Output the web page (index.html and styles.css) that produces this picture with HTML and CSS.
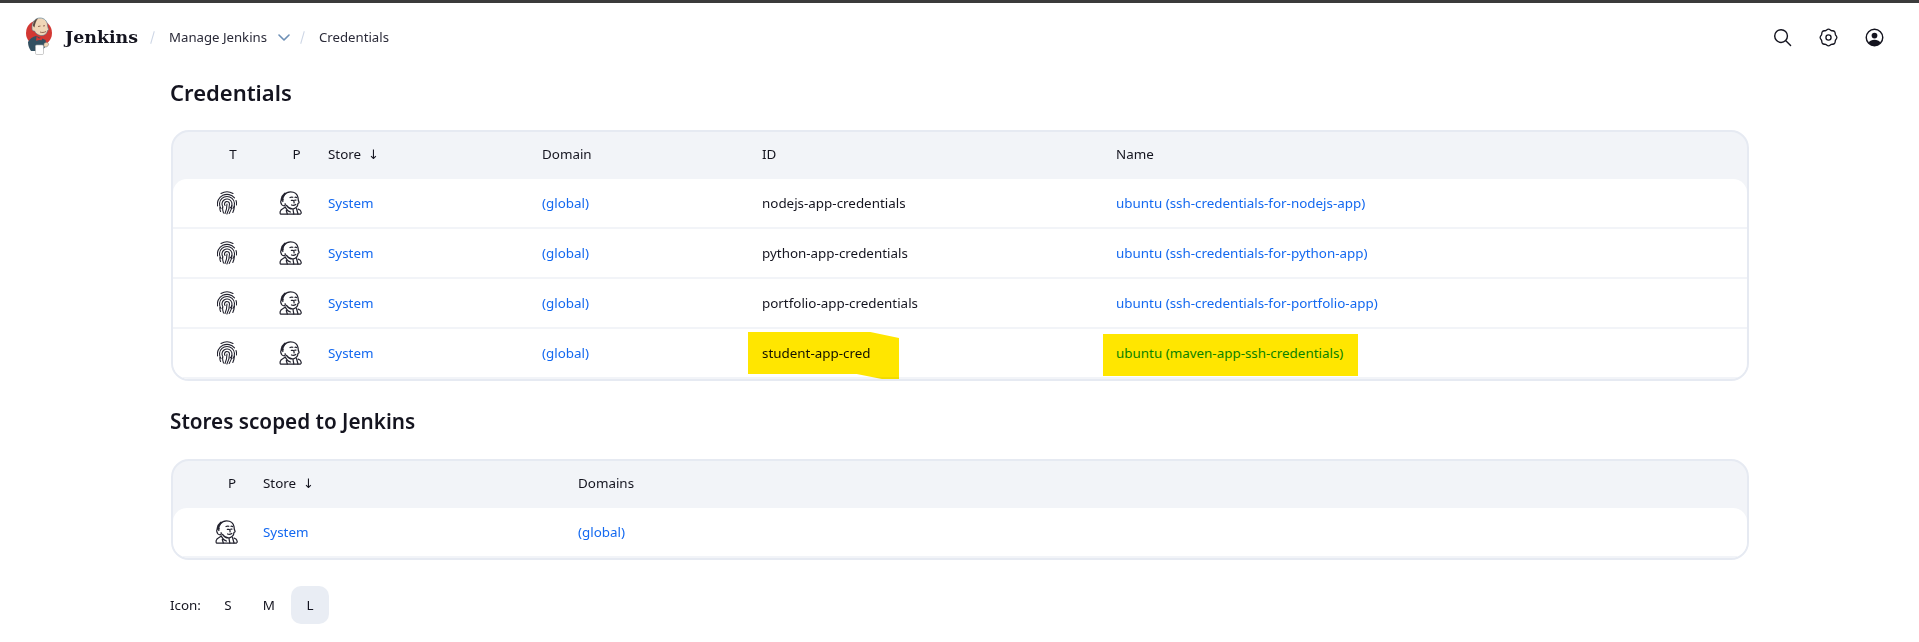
FILE: index.html
```html
<!DOCTYPE html>
<html lang="en">
<head>
<meta charset="UTF-8">
<meta name="viewport" content="width=device-width, initial-scale=1.0">
<title>Credentials - Jenkins</title>
<link rel="stylesheet" href="styles.css">
</head>
<body>

<svg class="sprites" width="0" height="0">
    <symbol id="fingerprint" viewBox="0 0 20 24">
        <g fill="none" stroke="#23232f" stroke-width="1.1" stroke-linecap="round">
            <path d="M4 2.500A12 12 0 0 1 16 2.500"/>
            <path d="M.6 15A9.700 9.700 0 0 1 17.500 6.800"/>
            <path d="M19 9.500A9.700 9.700 0 0 1 19.500 14"/>
            <path d="M4 17.500A7.500 7.500 0 1 1 16 17.500"/>
            <path d="M6 16A5 5 0 1 1 13 17"/>
            <path d="M8 14.500A2.500 2.500 0 1 1 12.500 13"/>
            <path d="M10 13c0 3-.5 6-2 9.500"/>
            <path d="M12.500 13c0 3.500-1 7-2.600 10"/>
            <path d="M15 14.500c0 3-1.200 5.500-2.800 8"/>
            <path d="M17.500 15c-.2 2.300-.6 4.300-1.700 6.500"/>
            <path d="M5.500 16c0 2.200.3 4 1 6"/>
            <path d="M2.800 16.500c0 1.400.2 2.700.8 4"/>
        </g>
    </symbol>
    <symbol id="butler" viewBox="0 0 23 24">
        <g fill="none" stroke="#23232f" stroke-width="1.250" stroke-linecap="round" stroke-linejoin="round">
            <path d="M3.800 10.500C3.200 5 6.500.8 11.500.8c4.300 0 7 2.700 7.500 5.700.3 1.700 0 3 .8 4 .8 1.200-.2 1.800-.8 1.800-.2 2.500-2 5-4.500 5.500-3 .5-5.500-1.300-7-3.500"/>
            <path d="M4 8.500C2.200 8.300 1.500 10 1.800 11.500c.3 1.800 1.700 3.200 3.500 3.300 1-.1 1.200-1.200.8-2.100"/>
            <path d="M11 6.500c1-.6 2-.6 2.800-.2M16 6.300c.6-.2 1.200-.1 1.600.2M12.300 9.300h1.500M15.900 9.100h1.100M12.500 14c1.500.6 3 .4 4.300-.5M14.800 9.500l.3 2.300"/>
            <path d="M6.500 16C4.500 17.500 1.500 18 1.200 20.500c-.2 1.500-.2 2.200.3 2.500h20c.700-.3.800-1.300.500-2.300-.3-1.300-1.300-2-2.800-2.500"/>
            <path d="M6.500 16.500c1 2 3 4 5 4.500M8.300 23l-1-3.500M14 18.500l.8 4.500M17.500 17.500l1.500 5.500"/>
            <path d="M2.600 8.500C3 6 4 4 6 2.500" stroke-width="2"/>
        </g>
    </symbol>
</svg>

<header class="topbar">
    <a class="brand">
        <svg class="logo" viewBox="0 0 28 38" width="28" height="38">
            <circle cx="14" cy="16" r="13" fill="#d33833"/>
            <path d="M7 12C6.500 5 10 1 15 1c4.500 0 7 3 7.500 7 .3 2 .5 3 1 4 .3 1-.5 1.500-1 1.500-.3 3.500-3.500 5.500-7 5-3-.5-5-2.500-6-4.500C8 14 7.200 13.500 7 12z" fill="#f0d6b7" stroke="#49728b" stroke-width=".6"/>
            <path d="M8 9C8 4.500 10.500 2 13 1.500 10.800 4 10 7 9.500 10.500z" fill="#5a4a42"/>
            <path d="M13 9.500l2.500-.5M18 9l2-.3M15 15c2 .8 4 .6 6-.5" fill="none" stroke="#7a4a3a" stroke-width=".8"/>
            <path d="M3 25c1.500-3.500 5-5.500 8-6l6 2.500 3.500 1.500 1 5.500-5 5.500H6C4.500 32 3 29 3 25z" fill="#335061"/>
            <path d="M11.500 19.500l2.500 2 3.500-1.300-.8 3-2.600-.2-3 .8z" fill="#d33833"/>
            <rect x="10.500" y="28" width="8" height="9.500" rx="1.200" fill="#fff" stroke="#aaa" stroke-width=".6"/>
            <path d="M19 26.500c1.500-1.500 4-1.200 4.500.2.500 1.500-1 3-2.500 3.300-1 .2-1.800-.2-2.200-.8z" fill="#f0d6b7" stroke="#777" stroke-width=".5"/>
        </svg>
        <span class="brand-name">Jenkins</span>
    </a>
    <nav class="crumbs">
        <span class="crumb-sep"></span>
        <a class="crumb">Manage Jenkins</a>
        <svg class="chevron" viewBox="0 0 12 7" width="12" height="7"><path d="M1 1l5 5 5-5" fill="none" stroke="#6d8fb5" stroke-width="1.600" stroke-linecap="round" stroke-linejoin="round"/></svg>
        <span class="crumb-sep"></span>
        <a class="crumb">Credentials</a>
    </nav>
    <div class="actions">
        <svg viewBox="0 0 20 20" width="19" height="19"><g fill="none" stroke="#14141f" stroke-width="1.500" stroke-linecap="round"><circle cx="8.500" cy="8.500" r="6.700"/><path d="M13.500 13.500L18.500 18.500"/></g></svg>
        <svg viewBox="0 0 20 20" width="19" height="19"><g fill="none" stroke="#14141f" stroke-width="1.400" stroke-linejoin="round"><path d="M10 1.200c1.400 0 2 1.100 3 1.500 1.100.4 2.400 0 3.300 1 1 .9.600 2.200 1 3.300.4 1 1.500 1.600 1.500 3s-1.100 2-1.500 3c-.4 1.100 0 2.400-1 3.300-.9 1-2.200.600-3.300 1-1 .4-1.600 1.500-3 1.500s-2-1.100-3-1.500c-1.100-.4-2.400 0-3.300-1-1-.9-.6-2.200-1-3.300-.4-1-1.500-1.600-1.500-3s1.100-2 1.500-3c.4-1.100 0-2.400 1-3.300.9-1 2.200-.6 3.300-1 1-.4 1.600-1.500 3-1.500z"/><circle cx="10" cy="10" r="2.700"/></g></svg>
        <svg viewBox="0 0 20 20" width="19" height="19"><circle cx="10" cy="10" r="8.700" fill="none" stroke="#14141f" stroke-width="1.500"/><circle cx="10" cy="8" r="3" fill="#14141f"/><path d="M3.800 15.500C5 13 7.500 12.300 10 12.300s5 .7 6.200 3.200C14.800 17.500 12.500 18.700 10 18.700s-4.800-1.200-6.200-3.200z" fill="#14141f"/></svg>
    </div>
</header>

<main class="page">
    <h1 class="title title-main">Credentials</h1>
    <div class="panel">
        <table class="grid">
            <colgroup>
                <col class="col-t"><col class="col-p"><col class="col-store"><col class="col-domain"><col class="col-id"><col>
            </colgroup>
            <thead>
                <tr>
                    <th class="icon-cell t-cell">T</th>
                    <th class="icon-cell">P</th>
                    <th>Store<span class="sort">↓</span></th>
                    <th>Domain</th>
                    <th>ID</th>
                    <th>Name</th>
                </tr>
            </thead>
            <tbody>
                <tr>
                    <td class="icon-cell t-cell"><svg class="ico-t"><use href="#fingerprint"/></svg></td>
                    <td class="icon-cell p-cell"><svg class="ico-p"><use href="#butler"/></svg></td>
                    <td><a class="link">System</a></td>
                    <td><a class="link">(global)</a></td>
                    <td>nodejs-app-credentials</td>
                    <td><a class="link">ubuntu (ssh-credentials-for-nodejs-app)</a></td>
                </tr>
                <tr>
                    <td class="icon-cell t-cell"><svg class="ico-t"><use href="#fingerprint"/></svg></td>
                    <td class="icon-cell p-cell"><svg class="ico-p"><use href="#butler"/></svg></td>
                    <td><a class="link">System</a></td>
                    <td><a class="link">(global)</a></td>
                    <td>python-app-credentials</td>
                    <td><a class="link">ubuntu (ssh-credentials-for-python-app)</a></td>
                </tr>
                <tr>
                    <td class="icon-cell t-cell"><svg class="ico-t"><use href="#fingerprint"/></svg></td>
                    <td class="icon-cell p-cell"><svg class="ico-p"><use href="#butler"/></svg></td>
                    <td><a class="link">System</a></td>
                    <td><a class="link">(global)</a></td>
                    <td>portfolio-app-credentials</td>
                    <td><a class="link">ubuntu (ssh-credentials-for-portfolio-app)</a></td>
                </tr>
                <tr>
                    <td class="icon-cell t-cell"><svg class="ico-t"><use href="#fingerprint"/></svg></td>
                    <td class="icon-cell p-cell"><svg class="ico-p"><use href="#butler"/></svg></td>
                    <td><a class="link">System</a></td>
                    <td><a class="link">(global)</a></td>
                    <td class="marked">student-app-cred<span class="marker marker-id"></span></td>
                    <td class="marked"><a class="link">ubuntu (maven-app-ssh-credentials)</a><span class="marker marker-name"></span></td>
                </tr>
            </tbody>
        </table>
    </div>

    <h2 class="title title-stores">Stores scoped to Jenkins</h2>
    <div class="panel">
        <table class="grid">
            <colgroup>
                <col class="col-p2"><col class="col-store2"><col>
            </colgroup>
            <thead>
                <tr>
                    <th class="icon-cell t-cell">P</th>
                    <th>Store<span class="sort">↓</span></th>
                    <th>Domains</th>
                </tr>
            </thead>
            <tbody>
                <tr>
                    <td class="icon-cell t-cell"><svg class="ico-p"><use href="#butler"/></svg></td>
                    <td><a class="link">System</a></td>
                    <td><a class="link">(global)</a></td>
                </tr>
            </tbody>
        </table>
    </div>

    <div class="icon-size">
        <span class="icon-label">Icon:</span>
        <button class="size-btn">S</button>
        <button class="size-btn">M</button>
        <button class="size-btn size-on">L</button>
    </div>
</main>

</body>
</html>
```

FILE: styles.css
```css
body {
    margin: 0;
    font-family: "Noto Sans", "Open Sans", sans-serif;
    font-size: 13.4px;
    color: #14141f;
    background: #fff;
}
.sprites {
    position: absolute;
}
.topbar {
    display: flex;
    align-items: center;
    height: 68px;
    padding: 0 35px 0 25px;
    border-top: 3px solid #3b3b3b;
}
.brand {
    display: flex;
    align-items: center;
    gap: 12px;
}
.logo {
    display: block;
    margin-bottom: 2px;
}
.brand-name {
    font-family: "DejaVu Serif", serif;
    font-weight: 700;
    font-size: 17.4px;
}
.crumbs {
    display: flex;
    align-items: center;
    margin-left: 14px;
}
.crumb-sep {
    width: 1px;
    height: 13px;
    margin-right: 16px;
    background: #ccd5e5;
    transform: rotate(16deg);
}
.crumb {
    font-size: 13.200px;
    color: #2a2a38;
}
.chevron {
    margin: 0 12px 0 11px;
}
.actions {
    display: flex;
    gap: 27px;
    margin-left: auto;
}
.page {
    padding: 8px 170px 0;
}
.title {
    margin: 0;
    font-size: 20.7px;
    font-weight: 600;
    line-height: 27px;
    color: #14141f;
}
.title-main {
    font-size: 22px;
}
.title-stores {
    margin-top: 27px;
}
.panel {
    margin: 24px 0 0 1px;
    border: 2px solid #e6eaf2;
    border-radius: 18px;
    background: #f2f4f8;
    overflow: hidden;
}
.grid {
    width: 100%;
    border-collapse: separate;
    border-spacing: 0;
    table-layout: fixed;
}
.grid th {
    height: 44px;
    padding: 0 0 3px;
    font-weight: 400;
    text-align: left;
    color: #14141f;
}
.grid td {
    height: 48px;
    padding: 0;
    background: #fff;
    border-bottom: 2px solid #f2f4f8;
}
.grid tbody tr:first-child td:first-child {
    border-top-left-radius: 14px;
}
.grid tbody tr:first-child td:last-child {
    border-top-right-radius: 14px;
}
.grid .icon-cell {
    text-align: center;
}
.grid th.t-cell {
    padding-left: 28px;
}
.grid td.t-cell {
    padding-left: 16px;
}
.grid td.p-cell {
    padding-right: 12px;
}
.col-t { width: 92px; }
.col-p { width: 63px; }
.col-store { width: 214px; }
.col-domain { width: 220px; }
.col-id { width: 354px; }
.col-p2 { width: 90px; }
.col-store2 { width: 315px; }
.ico-t {
    display: inline-block;
    width: 20px;
    height: 24px;
    vertical-align: middle;
}
.ico-p {
    display: inline-block;
    width: 23px;
    height: 24px;
    vertical-align: middle;
}
.sort {
    margin-left: 7px;
    font-family: "DejaVu Sans", sans-serif;
    font-size: 13px;
}
.link {
    color: #1469f0;
}
.marked {
    position: relative;
}
.marked .link {
    color: #0a9000;
}
.marker {
    position: absolute;
    background: #ffe600;
    mix-blend-mode: multiply;
}
.marker-id {
    left: -14px;
    top: 3px;
    width: 151px;
    height: 48px;
    clip-path: polygon(0 0, 81% 0, 100% 12.500%, 100% 100%, 92% 100%, 72% 87.500%, 0 87.500%);
}
.marker-name {
    left: -13px;
    top: 5px;
    width: 255px;
    height: 42px;
}
.icon-size {
    display: flex;
    align-items: center;
    gap: 3px;
    margin-top: 26px;
}
.icon-label {
    margin-right: 5px;
}
.size-btn {
    width: 38px;
    height: 38px;
    padding: 0;
    border: none;
    border-radius: 10px;
    background: none;
    font: inherit;
    color: #14141f;
}
.size-on {
    background: #e9edf4;
}
```
